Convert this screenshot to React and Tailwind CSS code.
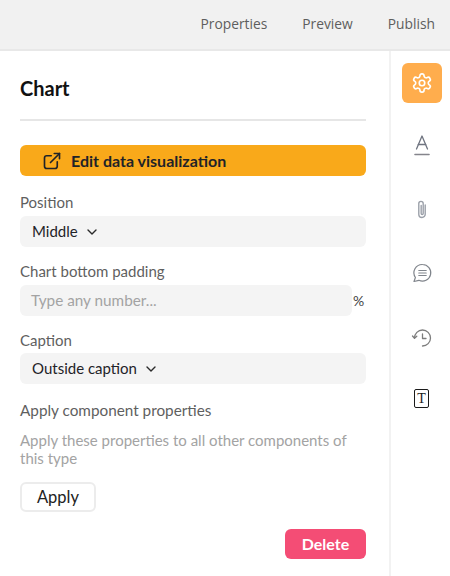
import React from "react";

function Chevron() {
  return (
    <svg width="10" height="6" viewBox="0 0 10 6" fill="none" stroke="#2a2a2a" strokeWidth="1.4" strokeLinecap="round" strokeLinejoin="round" className="ml-[9px]">
      <path d="M1 1l4 4 4-4" />
    </svg>
  );
}

function Select({ children }) {
  return (
    <div className="flex h-[31px] items-center rounded-[6px] bg-[#f4f4f4] pl-3 text-[15px] text-[#1f2328]">
      <span>{children}</span>
      <Chevron />
    </div>
  );
}

function Label({ children }) {
  return <div className="text-[15px] leading-[20px] text-[#5f5f5f]">{children}</div>;
}

export default function App() {
  return (
    <div className="flex h-[576px] w-[450px] flex-col overflow-hidden bg-white font-['Lato',sans-serif]">
      <header className="flex h-[51px] shrink-0 items-center justify-end gap-[35px] border-b-2 border-[#e8e8e8] bg-[#f1f1f1] pr-[15px] text-[13.8px] text-[#5e5e5e] font-['Open_Sans',sans-serif]">
        <span>Properties</span>
        <span>Preview</span>
        <span>Publish</span>
      </header>
      <div className="flex min-h-0 flex-1">
        <main className="w-[391px] shrink-0 border-r-2 border-[#f2f2f2] pl-5 pr-[23px]">
          <h1 className="mt-[23px] text-[20px] font-bold leading-[28px] text-[#111]">Chart</h1>
          <div className="mt-[17px] h-[2px] bg-[#e6e6e6]" />
          <button className="mt-[24px] flex h-[31px] w-full items-center rounded-[6px] bg-[#f9a91a] pl-[23px] text-[16px] font-bold text-[#1f2328]">
            <svg width="18" height="18" viewBox="0 0 24 24" fill="none" stroke="#1f2328" strokeWidth="2.2" strokeLinecap="round" strokeLinejoin="round">
              <path d="M19 13v6a3 3 0 0 1-3 3H5a3 3 0 0 1-3-3V8a3 3 0 0 1 3-3h6" />
              <path d="M15 2h7v7" />
              <path d="M10 14 22 2" />
            </svg>
            <span className="ml-[10px]">Edit data visualization</span>
          </button>

          <div className="mt-[16px] mb-[4px]"><Label>Position</Label></div>
          <Select>Middle</Select>

          <div className="mt-[14px] mb-[4px]"><Label>Chart bottom padding</Label></div>
          <div className="flex items-center">
            <div className="flex h-[31px] flex-1 items-center rounded-[6px] bg-[#f4f4f4] pl-[11px] text-[15.3px] text-[#a3a3a3]">Type any number...</div>
            <span className="w-[14px] pl-px text-left text-[14px] text-[#444]">%</span>
          </div>

          <div className="mt-[14px] mb-[3px]"><Label>Caption</Label></div>
          <Select>Outside caption</Select>

          <div className="mt-[16px] text-[15.3px] leading-[20px] text-[#5f5f5f]">Apply component properties</div>
          <p className="mt-[11px] text-[15px] leading-[18px] text-[#a3a3a3]">Apply these properties to all other components of this type</p>
          <button className="mt-[15px] block h-[30px] w-[76px] rounded-[6px] border-2 border-[#ececec] bg-white text-[16.5px] text-[#222]">Apply</button>
          <div className="mt-[17px] flex justify-end">
            <button className="h-[30px] w-[81px] rounded-[6px] bg-[#f44d75] text-[16px] font-bold text-white">Delete</button>
          </div>
        </main>
        <aside className="flex flex-1 flex-col items-center pt-[12px] pl-[2px]">
          <div className="flex h-[40px] w-[40px] items-center justify-center rounded-[6px] bg-[#ffad4d]">
            <svg width="22" height="22" viewBox="0 0 24 24" fill="none" stroke="#fff" strokeWidth="1.8" strokeLinecap="round" strokeLinejoin="round">
              <path d="M12.22 2h-.44a2 2 0 0 0-2 2v.18a2 2 0 0 1-1 1.73l-.43.25a2 2 0 0 1-2 0l-.15-.08a2 2 0 0 0-2.73.73l-.22.38a2 2 0 0 0 .73 2.73l.15.1a2 2 0 0 1 1 1.72v.51a2 2 0 0 1-1 1.74l-.15.09a2 2 0 0 0-.73 2.73l.22.38a2 2 0 0 0 2.73.73l.15-.08a2 2 0 0 1 2 0l.43.25a2 2 0 0 1 1 1.73V20a2 2 0 0 0 2 2h.44a2 2 0 0 0 2-2v-.18a2 2 0 0 1 1-1.73l.43-.25a2 2 0 0 1 2 0l.15.08a2 2 0 0 0 2.73-.73l.22-.39a2 2 0 0 0-.73-2.73l-.15-.08a2 2 0 0 1-1-1.74v-.5a2 2 0 0 1 1-1.74l.15-.09a2 2 0 0 0 .73-2.73l-.22-.38a2 2 0 0 0-2.73-.73l-.15.08a2 2 0 0 1-2 0l-.43-.25a2 2 0 0 1-1-1.73V4a2 2 0 0 0-2-2z" />
              <circle cx="12" cy="12" r="3" />
            </svg>
          </div>
          <svg className="mt-[31px]" width="18" height="22" viewBox="0 0 18 22" fill="none" stroke="#6f7480" strokeWidth="1.3" strokeLinecap="round" strokeLinejoin="round">
            <path d="M3.5 15 9 2l5.5 13" />
            <path d="M5.3 10.5h7.4" />
            <path d="M2 20.5h14" stroke="#85858c" strokeWidth="1.6" />
          </svg>
          <svg className="mt-[43px]" width="22" height="22" viewBox="0 0 24 24" fill="none" stroke="#9a9fa8" strokeWidth="1.5" strokeLinecap="round" strokeLinejoin="round">
            <path d="M15.500 6.500v10.200a3.500 3.500 0 0 1-7 0V5a2.400 2.400 0 0 1 4.800 0v10.800a1.100 1.100 0 0 1-2.200 0V7" />
          </svg>
          <svg className="mt-[41px]" width="22" height="22" viewBox="0 0 22 22" fill="none" stroke="#80858c" strokeWidth="1.2" strokeLinecap="round" strokeLinejoin="round">
            <path d="M11.500 2.500a8.300 8.300 0 1 1-3.600 15.800L3 19.500l1.400-4A8.300 8.300 0 0 1 11.500 2.500z" />
            <path d="M7.800 8.500h7.400M7.800 11h7.400M7.800 13.500h7.400" />
          </svg>
          <svg className="mt-[43px]" width="22" height="22" viewBox="0 0 22 22" fill="none" stroke="#7d7d7d" strokeWidth="1.3" strokeLinecap="round" strokeLinejoin="round">
            <path d="M3.500 11a8 8 0 1 1 8 8" />
            <path d="M1.500 9l2 2.300L5.800 9.300" />
            <path d="M11.500 7v4.500h3.500" />
          </svg>
          <div className="mt-[40px] flex h-[19px] w-[15px] items-center justify-center rounded-[2px] border-[1.5px] border-[#1a1a1a] font-['Liberation_Serif',serif] text-[14px] leading-none text-[#1a1a1a]">T</div>
        </aside>
      </div>
    </div>
  );
}
